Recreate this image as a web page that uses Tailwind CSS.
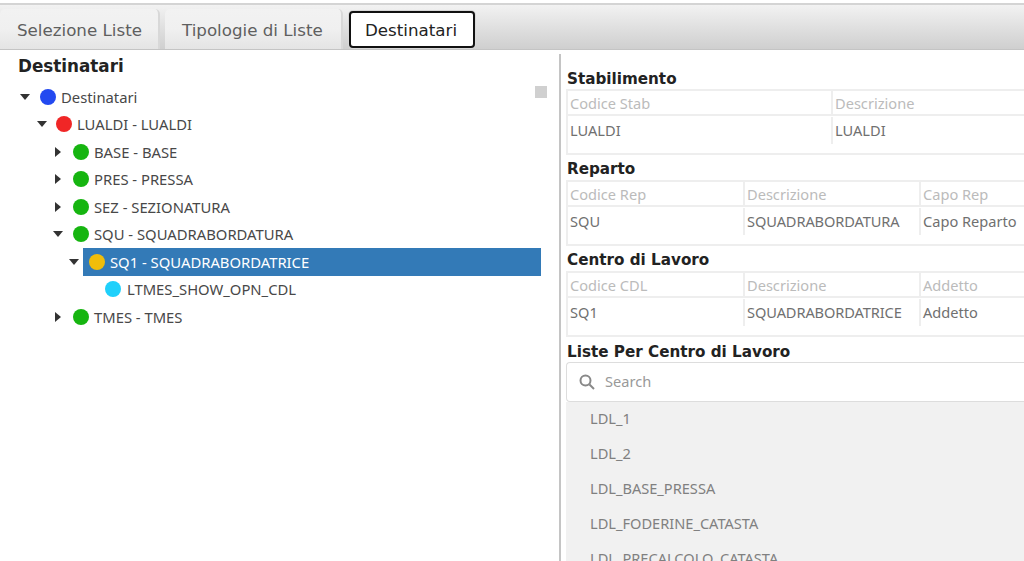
<!DOCTYPE html>
<html>
<head>
    <title>Destinatari</title>
    <script src="https://cdn.jsdelivr.net/npm/@tailwindcss/browser@4"></script>
</head>
<body class="bg-white h-[561px] w-[1024px] overflow-hidden font-['Noto_Sans',sans-serif]">
    <!-- Tab bar -->
    <div class="h-[3px] bg-white"></div>
    <div class="h-[47px] pt-[5px] flex items-end gap-[5px] border-t-2 border-b border-t-[#d4d4d4] border-b-[#c4c4c4] bg-gradient-to-b from-[#f2f2f2] to-[#cfcfcf] font-['DejaVu_Sans',sans-serif] text-[16.7px] text-[#5f5f5f]">
        <div class="w-[160px] h-[40px] pl-[17px] pt-[3px] flex items-center rounded-t-[5px] bg-gradient-to-b from-[#f2f2f2] via-[#f0f0f0] to-[#e4e4e4] border-r-2 border-[#d8d8d8]">Selezione Liste</div>
        <div class="w-[178px] h-[40px] pl-[17px] pt-[3px] flex items-center rounded-t-[5px] bg-gradient-to-b from-[#f2f2f2] via-[#f0f0f0] to-[#e4e4e4] border-r-2 border-[#d8d8d8]">Tipologie di Liste</div>
        <div class="ml-[1px] mb-[1px] w-[126px] h-[37px] pl-[14px] pt-[2px] flex items-center rounded-[4px] bg-white border-2 border-[#111] text-[#222] shadow-[0_0_0_1px_#d8d8d8]">Destinatari</div>
    </div>

    <div class="flex h-[511px]">
        <!-- Tree -->
        <div class="relative w-[559px] shrink-0 text-[14.8px] text-[#484848]">
            <h2 class="pl-[18px] pt-[4px] h-[33px] font-['DejaVu_Sans',sans-serif] font-bold text-[16.8px] text-[#222]">Destinatari</h2>
            <div class="absolute left-[535px] top-[36px] w-[12px] h-[12px] bg-[#d0d0d0]"></div>
            <ul>
                <li class="h-[27.5px] flex items-center pl-[19px]">
                    <svg class="w-[12px] h-[8px] mr-[9px]" viewBox="0 0 12 8"><path d="M1 1h10L6 7z" fill="#333"/></svg>
                    <span class="w-[16px] h-[16px] rounded-full bg-[#2349f0] mr-[5px]"></span>Destinatari
                </li>
                <li class="h-[27.5px] flex items-center pl-[36px]">
                    <svg class="w-[12px] h-[8px] mr-[8px]" viewBox="0 0 12 8"><path d="M1 1h10L6 7z" fill="#333"/></svg>
                    <span class="w-[16px] h-[16px] rounded-full bg-[#f02626] mr-[5px]"></span>LUALDI - LUALDI
                </li>
                <li class="h-[27.5px] flex items-center pl-[54px]">
                    <svg class="w-[8px] h-[12px] mr-[11px]" viewBox="0 0 8 12"><path d="M1 1v10l6-5z" fill="#333"/></svg>
                    <span class="w-[16px] h-[16px] rounded-full bg-[#16b510] mr-[5px]"></span>BASE - BASE
                </li>
                <li class="h-[27.5px] flex items-center pl-[54px]">
                    <svg class="w-[8px] h-[12px] mr-[11px]" viewBox="0 0 8 12"><path d="M1 1v10l6-5z" fill="#333"/></svg>
                    <span class="w-[16px] h-[16px] rounded-full bg-[#16b510] mr-[5px]"></span>PRES - PRESSA
                </li>
                <li class="h-[27.5px] flex items-center pl-[54px]">
                    <svg class="w-[8px] h-[12px] mr-[11px]" viewBox="0 0 8 12"><path d="M1 1v10l6-5z" fill="#333"/></svg>
                    <span class="w-[16px] h-[16px] rounded-full bg-[#16b510] mr-[5px]"></span>SEZ - SEZIONATURA
                </li>
                <li class="h-[27.5px] flex items-center pl-[52px]">
                    <svg class="w-[12px] h-[8px] mr-[9px]" viewBox="0 0 12 8"><path d="M1 1h10L6 7z" fill="#333"/></svg>
                    <span class="w-[16px] h-[16px] rounded-full bg-[#16b510] mr-[5px]"></span>SQU - SQUADRABORDATURA
                </li>
                <li class="h-[27.5px] flex items-center pl-[68px]">
                    <svg class="w-[12px] h-[8px] mr-[3px]" viewBox="0 0 12 8"><path d="M1 1h10L6 7z" fill="#333"/></svg>
                    <div class="w-[458px] h-[28px] flex items-center pl-[6px] bg-[#337ab7] text-white">
                        <span class="w-[16px] h-[16px] rounded-full bg-[#f0bd0a] mr-[5px]"></span>SQ1 - SQUADRABORDATRICE
                    </div>
                </li>
                <li class="h-[27.5px] flex items-center pl-[105px]">
                    <span class="w-[16px] h-[16px] rounded-full bg-[#1fd0fb] mr-[6px]"></span>LTMES_SHOW_OPN_CDL
                </li>
                <li class="h-[27.5px] flex items-center pl-[54px]">
                    <svg class="w-[8px] h-[12px] mr-[11px]" viewBox="0 0 8 12"><path d="M1 1v10l6-5z" fill="#333"/></svg>
                    <span class="w-[16px] h-[16px] rounded-full bg-[#16b510] mr-[5px]"></span>TMES - TMES
                </li>
            </ul>
        </div>

        <!-- Details -->
        <div class="mt-[4px] pl-[5px] border-l-2 border-[#c4c4c4] grow text-[14.6px] text-[#707070]">
            <h3 class="h-[35px] pl-[1px] pt-[15px] font-['DejaVu_Sans',sans-serif] font-bold text-[15.2px] leading-[20px] text-[#222]">Stabilimento</h3>
            <div class="h-[66px] border-2 border-r-0 border-[#eeeeee]">
                <div class="flex h-[25px] border-b-2 border-[#eeeeee] text-[#bbb]">
                    <div class="w-[265px] pl-[2px] leading-[25px] border-r-2 border-[#eeeeee]">Codice Stab</div>
                    <div class="pl-[2px] leading-[25px]">Descrizione</div>
                </div>
                <div class="flex h-[27px] mt-[1px]">
                    <div class="w-[265px] pl-[2px] leading-[27px] border-r-2 border-[#eeeeee]">LUALDI</div>
                    <div class="pl-[2px] leading-[27px]">LUALDI</div>
                </div>
            </div>

            <h3 class="h-[25px] pl-[1px] pt-[4px] font-['DejaVu_Sans',sans-serif] font-bold text-[15.2px] leading-[20px] text-[#222]">Reparto</h3>
            <div class="h-[66px] border-2 border-r-0 border-[#eeeeee]">
                <div class="flex h-[25px] border-b-2 border-[#eeeeee] text-[#bbb]">
                    <div class="w-[177px] pl-[2px] leading-[25px] border-r-2 border-[#eeeeee]">Codice Rep</div>
                    <div class="w-[176px] pl-[2px] leading-[25px] border-r-2 border-[#eeeeee]">Descrizione</div>
                    <div class="pl-[2px] leading-[25px]">Capo Rep</div>
                </div>
                <div class="flex h-[27px] mt-[1px]">
                    <div class="w-[177px] pl-[2px] leading-[27px] border-r-2 border-[#eeeeee]">SQU</div>
                    <div class="w-[176px] pl-[2px] leading-[27px] border-r-2 border-[#eeeeee] tracking-[-0.1px]">SQUADRABORDATURA</div>
                    <div class="pl-[2px] leading-[27px]">Capo Reparto</div>
                </div>
            </div>

            <h3 class="h-[25px] pl-[1px] pt-[4px] font-['DejaVu_Sans',sans-serif] font-bold text-[15.2px] leading-[20px] text-[#222]">Centro di Lavoro</h3>
            <div class="h-[66px] border-2 border-r-0 border-[#eeeeee]">
                <div class="flex h-[25px] border-b-2 border-[#eeeeee] text-[#bbb]">
                    <div class="w-[177px] pl-[2px] leading-[25px] border-r-2 border-[#eeeeee]">Codice CDL</div>
                    <div class="w-[176px] pl-[2px] leading-[25px] border-r-2 border-[#eeeeee]">Descrizione</div>
                    <div class="pl-[2px] leading-[25px]">Addetto</div>
                </div>
                <div class="flex h-[27px] mt-[1px]">
                    <div class="w-[177px] pl-[2px] leading-[27px] border-r-2 border-[#eeeeee]">SQ1</div>
                    <div class="w-[176px] pl-[2px] leading-[27px] border-r-2 border-[#eeeeee] tracking-[-0.1px]">SQUADRABORDATRICE</div>
                    <div class="pl-[2px] leading-[27px]">Addetto</div>
                </div>
            </div>

            <h3 class="h-[25px] pl-[1px] pt-[5px] font-['DejaVu_Sans',sans-serif] font-bold text-[15.2px] leading-[20px] text-[#222]">Liste Per Centro di Lavoro</h3>
            <div class="h-[40px] flex items-center pl-[12px] border border-r-0 border-[#dddddd] rounded-l-[4px] text-[#999]">
                <svg class="w-[16px] h-[16px] mr-[10px]" viewBox="0 0 16 16" fill="none" stroke="#888" stroke-width="2"><circle cx="6.5" cy="6.5" r="5"/><path d="M10.5 10.5l4.5 4.5"/></svg>
                Search
            </div>
            <ul class="bg-[#f1f1f1] pl-[24px] text-[#808080] h-[160px] overflow-hidden">
                <li class="h-[34px] leading-[33px]">LDL_1</li>
                <li class="h-[35px] leading-[35px]">LDL_2</li>
                <li class="h-[35px] leading-[35px]">LDL_BASE_PRESSA</li>
                <li class="h-[35px] leading-[35px]">LDL_FODERINE_CATASTA</li>
                <li class="h-[35px] leading-[35px]">LDL_PRECALCOLO_CATASTA</li>
            </ul>
        </div>
    </div>
</body>
</html>
